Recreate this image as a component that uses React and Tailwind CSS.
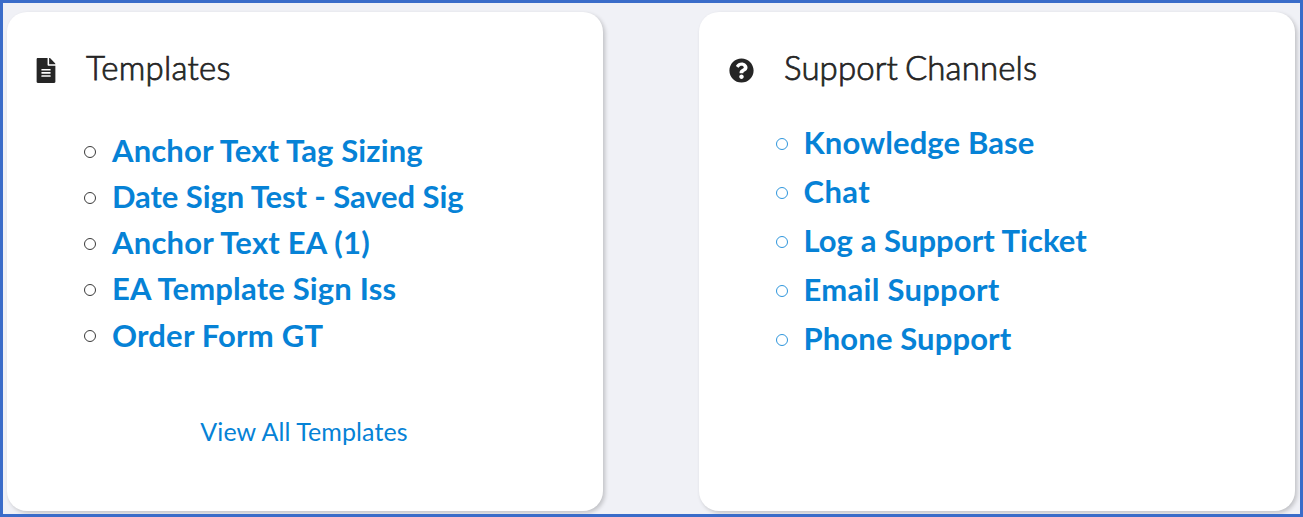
import React from 'react';
import { FaFileAlt, FaQuestionCircle } from 'react-icons/fa';

const templates = [
  { name: 'Anchor Text Tag Sizing', tracking: 'tracking-[0.14px]' },
  { name: 'Date Sign Test - Saved Sig', tracking: 'tracking-[-0.08px]' },
  { name: 'Anchor Text EA (1)', tracking: 'tracking-[0.22px]' },
  { name: 'EA Template Sign Iss', tracking: 'tracking-[0.17px]' },
  { name: 'Order Form GT', tracking: 'tracking-[0.2px]' },
];

const channels = [
  { name: 'Knowledge Base', tracking: 'tracking-[0.12px]' },
  { name: 'Chat', tracking: 'tracking-[0.4px]' },
  { name: 'Log a Support Ticket', tracking: 'tracking-[0.07px]' },
  { name: 'Email Support', tracking: 'tracking-[0.27px]' },
  { name: 'Phone Support', tracking: 'tracking-[0.12px]' },
];

const Bullet = ({ className }) => (
  <span className={`w-[12px] h-[12px] rounded-full border ${className}`} />
);

const App = () => {
  return (
    <div className="w-[1303px] h-[517px] bg-[#f0f1f6] border-[3px] border-[#3a6cc9] flex justify-between pt-[9px] pb-[3px] pl-[4px] pr-[5px] font-['Lato',sans-serif] overflow-hidden">
      {/* Templates */}
      <section className="w-[596px] h-[499px] bg-white rounded-[20px] shadow-[2px_2px_4px_rgba(0,0,0,0.2)] flex flex-col">
        <div className="flex items-center h-[40px] mt-[36px] pl-[29px]">
          <FaFileAlt className="w-[20px] h-[25px] mt-[5px] text-[#252525]" />
          <h2 className="ml-[30px] mt-[-2px] text-[33px] leading-[40px] tracking-[0.25px] text-[#252525] font-light [-webkit-text-stroke:0.75px_#252525]">Templates</h2>
        </div>
        <ul className="mt-[39px] pl-[77px]">
          {templates.map(({ name, tracking }) => (
            <li key={name} className="flex items-center h-[46.2px]">
              <Bullet className="border-[#3a3a3a] mt-[3px]" />
              <a className={`ml-[16px] text-[31px] font-bold text-[#0682d6] ${tracking}`}>{name}</a>
            </li>
          ))}
        </ul>
        <a className="mt-[53px] pr-[2px] text-center text-[25px] leading-[40px] tracking-[0.1px] text-[#0682d6]">View All Templates</a>
      </section>

      {/* Support Channels */}
      <section className="w-[596px] h-[499px] bg-white rounded-[20px] shadow-[2px_2px_4px_rgba(0,0,0,0.2)] flex flex-col">
        <div className="flex items-center h-[40px] mt-[36px] pl-[30px]">
          <FaQuestionCircle className="w-[25px] h-[25px] mt-[5px] text-[#252525]" />
          <h2 className="ml-[30px] mt-[-2px] text-[33px] leading-[40px] tracking-[0.1px] [word-spacing:-2px] text-[#252525] font-light [-webkit-text-stroke:0.75px_#252525]">Support Channels</h2>
        </div>
        <ul className="mt-[30px] pl-[77px]">
          {channels.map(({ name, tracking }) => (
            <li key={name} className="flex items-center h-[49px]">
              <Bullet className="border-[#2f96dc] mt-[3px]" />
              <a className={`ml-[15.5px] text-[31px] font-bold text-[#0682d6] ${tracking}`}>{name}</a>
            </li>
          ))}
        </ul>
      </section>
    </div>
  );
};

export default App;
